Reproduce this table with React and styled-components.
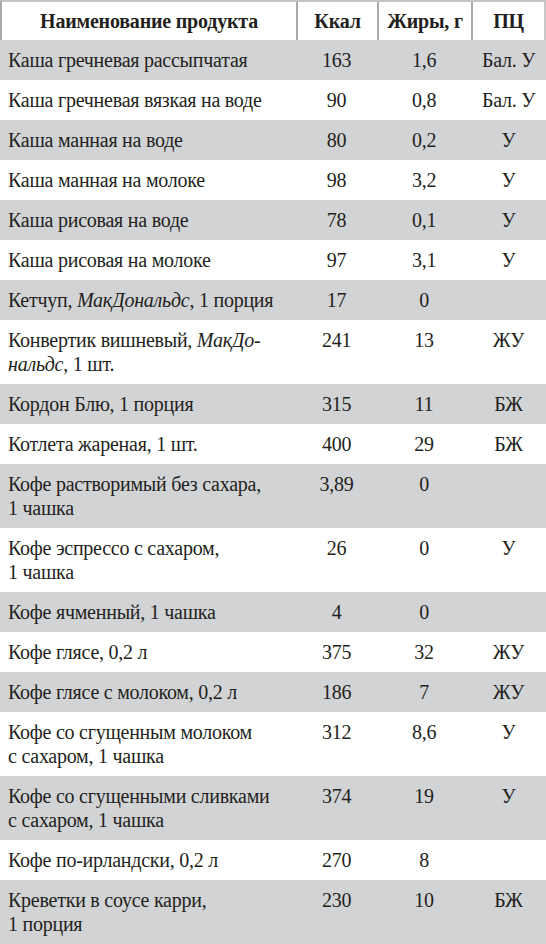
import styled, { createGlobalStyle } from "styled-components";

const GlobalStyle = createGlobalStyle`
    html, body {
        margin: 0;
        padding: 0;
        background: #ffffff;
        font-family: "Liberation Serif", Tinos, "Times New Roman", serif;
    }
`;

// название, ккал, жиры, ПЦ
const rows = [
    [["Каша гречневая рассыпчатая"], "163", "1,6", "Бал. У"],
    [["Каша гречневая вязкая на воде"], "90", "0,8", "Бал. У"],
    [["Каша манная на воде"], "80", "0,2", "У"],
    [["Каша манная на молоке"], "98", "3,2", "У"],
    [["Каша рисовая на воде"], "78", "0,1", "У"],
    [["Каша рисовая на молоке"], "97", "3,1", "У"],
    [[<>Кетчуп, <i>МакДональдс</i>, 1 порция</>], "17", "0", ""],
    [[<>Конвертик вишневый, <i>МакДо-</i></>, <><i>нальдс</i>, 1 шт.</>], "241", "13", "ЖУ"],
    [["Кордон Блю, 1 порция"], "315", "11", "БЖ"],
    [["Котлета жареная, 1 шт."], "400", "29", "БЖ"],
    [["Кофе растворимый без сахара,", "1 чашка"], "3,89", "0", ""],
    [["Кофе эспрессо с сахаром,", "1 чашка"], "26", "0", "У"],
    [["Кофе ячменный, 1 чашка"], "4", "0", ""],
    [["Кофе глясе, 0,2 л"], "375", "32", "ЖУ"],
    [["Кофе глясе с молоком, 0,2 л"], "186", "7", "ЖУ"],
    [["Кофе со сгущенным молоком", "с сахаром, 1 чашка"], "312", "8,6", "У"],
    [["Кофе со сгущенными сливками", "с сахаром, 1 чашка"], "374", "19", "У"],
    [["Кофе по-ирландски, 0,2 л"], "270", "8", ""],
    [["Креветки в соусе карри,", "1 порция"], "230", "10", "БЖ"],
];

const App = () => {
    return (
        <>
            <GlobalStyle />
            <Table>
                <Head>
                    <HeadCell>Наименование продукта</HeadCell>
                    <HeadCell>Ккал</HeadCell>
                    <HeadCell>Жиры, г</HeadCell>
                    <HeadCell $last>ПЦ</HeadCell>
                </Head>
                {rows.map(([name, kcal, fat, pc], i) => (
                    <Row key={i} $shaded={i % 2 === 0}>
                        <NameCell>
                            {name.map((line, j) => (
                                <Line key={j}>{line}</Line>
                            ))}
                        </NameCell>
                        <NumCell>{kcal}</NumCell>
                        <NumCell>{fat}</NumCell>
                        <NumCell>{pc}</NumCell>
                    </Row>
                ))}
            </Table>
        </>
    );
};

export default App;

const columns = "296px 81px 94px 1fr";

const Table = styled.div`
    width: 546px;
    display: flex;
    flex-direction: column;
    font-family: "Liberation Serif", Tinos, "Times New Roman", serif;
    color: #231f20;
`;

const Head = styled.div`
    display: grid;
    grid-template-columns: ${columns};
    height: 40px;
    border-top: 2px solid #c4c4c4;
    border-left: 2px solid #a9a9a9;
    box-sizing: border-box;
`;

const HeadCell = styled.div`
    display: flex;
    align-items: center;
    justify-content: center;
    font-weight: bold;
    font-size: 20px;
    letter-spacing: -0.2px;
    white-space: nowrap;
    border-right: 2px solid ${(p) => (p.$last ? "#c8c8c8" : "#a9a9a9")};
`;

const Row = styled.div`
    display: grid;
    grid-template-columns: ${columns};
    background-color: ${(p) => (p.$shaded ? "#d2d3d5" : "#ffffff")};
    padding: 8px 0 8px 0;
    font-size: 20px;
    line-height: 24px;
    letter-spacing: -0.25px;
`;

const NameCell = styled.div`
    padding-left: 8px;
    white-space: nowrap;
`;

const Line = styled.div``;

const NumCell = styled.div`
    text-align: center;
    white-space: nowrap;
`;
